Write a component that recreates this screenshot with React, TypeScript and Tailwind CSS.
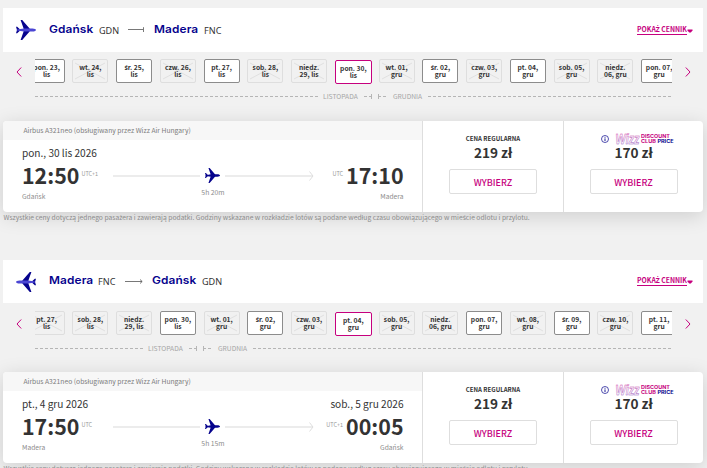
import clsx from 'clsx';

type DayState = 'open' | 'closed' | 'active';

interface Day {
  top: string;
  bottom: string;
  state: DayState;
}

interface Stop {
  city: string;
  date?: string;
  time: string;
  zone: string;
}

interface Flight {
  from: [string, string];
  to: [string, string];
  inbound?: boolean;
  days: Day[];
  departure: Stop;
  arrival: Stop;
  duration: string;
}

const day = (top: string, bottom: string, state: DayState = 'closed'): Day => ({ top, bottom, state });

const flights: Flight[] = [
  {
    from: ['Gdańsk', 'GDN'],
    to: ['Madera', 'FNC'],
    days: [
      day('pon. 23,', 'lis', 'open'),
      day('wt. 24,', 'lis'),
      day('śr. 25,', 'lis', 'open'),
      day('czw. 26,', 'lis'),
      day('pt. 27,', 'lis', 'open'),
      day('sob. 28,', 'lis'),
      day('niedz.', '29, lis'),
      day('pon. 30,', 'lis', 'active'),
      day('wt. 01,', 'gru'),
      day('śr. 02,', 'gru', 'open'),
      day('czw. 03,', 'gru'),
      day('pt. 04,', 'gru', 'open'),
      day('sob. 05,', 'gru'),
      day('niedz.', '06, gru'),
      day('pon. 07,', 'gru', 'open'),
    ],
    departure: { city: 'Gdańsk', date: 'pon., 30 lis 2026', time: '12:50', zone: 'UTC+1' },
    arrival: { city: 'Madera', time: '17:10', zone: 'UTC' },
    duration: '5h 20m',
  },
  {
    from: ['Madera', 'FNC'],
    to: ['Gdańsk', 'GDN'],
    inbound: true,
    days: [
      day('pt. 27,', 'lis'),
      day('sob. 28,', 'lis'),
      day('niedz.', '29, lis'),
      day('pon. 30,', 'lis', 'open'),
      day('wt. 01,', 'gru'),
      day('śr. 02,', 'gru', 'open'),
      day('czw. 03,', 'gru'),
      day('pt. 04,', 'gru', 'active'),
      day('sob. 05,', 'gru'),
      day('niedz.', '06, gru'),
      day('pon. 07,', 'gru', 'open'),
      day('wt. 08,', 'gru'),
      day('śr. 09,', 'gru', 'open'),
      day('czw. 10,', 'gru'),
      day('pt. 11,', 'gru', 'open'),
    ],
    departure: { city: 'Madera', date: 'pt., 4 gru 2026', time: '17:50', zone: 'UTC' },
    arrival: { city: 'Gdańsk', date: 'sob., 5 gru 2026', time: '00:05', zone: 'UTC+1' },
    duration: '5h 15m',
  },
];

// The CJK face misplaces the accents of these letters, so they come from Noto Sans
function Polish({ children }: { children: string }) {
  return (
    <>
      {children.split(/([śŚżŻąę])/).map((part, i) =>
        i % 2 ? (
          <span key={i} className="font-['Noto_Sans']">
            {part}
          </span>
        ) : (
          part
        )
      )}
    </>
  );
}

function Plane({ className, body }: { className: string; body: string }) {
  return (
    <svg viewBox="0 0 20 20" className={className}>
      <path
        d="M4.6 0H6.2L13.6 8.6V11.4L6.2 20H4.6L7.6 11.4V8.6ZM0 6.8H1.2L3.6 9V11L1.2 13.2H0L1 10Z"
        fill="#06038d"
      />
      <path d="M.8 9.5L8 8.4H16.5C18.6 8.4 20 9.4 20 10S18.6 11.6 16.5 11.6H8L.8 10.5Z" fill={body} />
    </svg>
  );
}

function RouteHeader({ flight }: { flight: Flight }) {
  const { from, to, inbound } = flight;
  const city =
    "w-[43px] origin-left scale-x-[1.1] font-['Inter'] text-[10.8px] font-semibold tracking-[0.1px] whitespace-nowrap text-[#06038d]";
  const code = "mt-px font-['Noto_Sans'] text-[9.1px] text-[#333]";

  return (
    <header
      className={clsx('flex items-center bg-white pr-[10px] pl-[13px] leading-none', inbound ? 'h-[43px]' : 'h-[44px]')}
    >
      <Plane className={clsx('h-5 w-5', inbound && '-scale-x-100')} body="#4b46d3" />
      <span className={clsx(city, 'ml-[13px]')}>{from[0]}</span>
      <span className={clsx(code, inbound ? 'ml-[6px] w-[19px]' : 'ml-[7px] w-[20px]')}>{from[1]}</span>
      {inbound ? (
        <svg viewBox="0 0 18 6" className="ml-[8px] h-[6px] w-[18px]" fill="none" stroke="#555">
          <path d="M0 2.5H17M15 .5L17.2 2.5L15 4.5" strokeWidth=".8" />
        </svg>
      ) : (
        <svg viewBox="0 0 17 6" className="ml-[9px] h-[6px] w-[17px]" fill="none" stroke="#555">
          <path d="M0 2.5H15M15.5 .2V5" strokeWidth=".8" />
        </svg>
      )}
      <span className={clsx(city, 'ml-[9px]')}>{to[0]}</span>
      <span className={clsx(code, 'ml-[7px]')}>{to[1]}</span>
      <a className="ml-auto flex items-center text-[6.8px] font-bold text-[#c6007e]">
        <span className="h-[9px] border-b border-[#c6007e] leading-[7px] whitespace-nowrap">
          <Polish>POKAŻ CENNIK</Polish>
        </span>
        <svg viewBox="0 0 6 4" className="mt-px h-1 w-[6px]">
          <path d="M.5 .5H5.5V1.6L3.8 3.4H2.2L.5 1.6Z" fill="#c6007e" />
        </svg>
      </a>
    </header>
  );
}

function Chevron({ flip }: { flip?: boolean }) {
  return (
    <svg viewBox="0 0 6 10" className={clsx('h-[10px] w-[6px] shrink-0', flip && '-scale-x-100')} fill="none">
      <path d="M5.2 .5L1 5L5.2 9.5" stroke="#c6007e" />
    </svg>
  );
}

function DayChip({ item }: { item: Day }) {
  return (
    <div className="flex h-[25px] w-[43.75px] shrink-0 items-start">
      <div
        className={clsx(
          'relative flex w-[36px] flex-col items-center justify-center rounded-[2px] border text-[6.7px] leading-[7px] font-bold whitespace-nowrap text-[#333]',
          item.state === 'open' && 'h-6 border-[#8c8c8c] bg-white',
          item.state === 'closed' && 'h-6 border-[#dedede]',
          item.state === 'active' && 'mt-px h-6 w-[37px] border-[#c6007e] bg-white'
        )}
      >
        {item.state === 'closed' && (
          <svg viewBox="0 0 34 22" className="absolute inset-0 h-full w-full" stroke="#dedede" strokeWidth=".9">
            <path d="M2 3L32 19M2 19L32 3" />
          </svg>
        )}
        <span className="relative h-[7px]">
          <Polish>{item.top}</Polish>
        </span>
        <span className="relative h-[7px]">{item.bottom}</span>
      </div>
    </div>
  );
}

function Dashes({ className }: { className?: string }) {
  return (
    <svg className={clsx('h-[5px]', className)} stroke="#b5b5b5">
      <line x1="0" y1="2.5" x2="100%" y2="2.5" strokeDasharray="3 2" />
    </svg>
  );
}

function Months({ inbound }: { inbound?: boolean }) {
  return (
    <div className="mx-8 mt-2 flex h-[9px] items-center text-[6.7px] leading-none text-[#a5a5a5]">
      <Dashes className={inbound ? 'w-[108px]' : 'w-[283px]'} />
      <span className="ml-[5px] w-[36px] whitespace-nowrap">LISTOPADA</span>
      <svg viewBox="0 0 22 5" className="ml-[5px] h-[5px] w-[22px] shrink-0" stroke="#b5b5b5">
        <path d="M0 2.5H3M5 2.5H7.5M7.5 0V5M14.5 0V5M14.5 2.5H17M19 2.5H22" />
      </svg>
      <span className="ml-[7px] w-[30px] whitespace-nowrap">GRUDNIA</span>
      <Dashes className="ml-[5px] flex-1" />
    </div>
  );
}

function DayStrip({ flight }: { flight: Flight }) {
  return (
    <div
      className={clsx('flex h-[25px] items-center justify-between pr-[12px] pl-[13px]', flight.inbound ? 'mt-2' : 'mt-[7px]')}
    >
      <Chevron />
      <div className="flex w-[637px] overflow-hidden">
        <div className="-ml-[6.4px] flex">
          {flight.days.map((item) => (
            <DayChip key={item.top + item.bottom} item={item} />
          ))}
        </div>
      </div>
      <Chevron flip />
    </div>
  );
}

function StopInfo({ stop, right }: { stop: Stop; right?: boolean }) {
  return (
    <div className={clsx('flex flex-col leading-none whitespace-nowrap', right && 'items-end')}>
      <span className="h-[14px] text-[10.1px] leading-[14px] text-[#333]">{stop.date}</span>
      <div className={clsx('mt-px flex h-[28px]', right && 'flex-row-reverse')}>
        <span className="text-[21.4px] leading-[28px] font-bold text-[#333]">{stop.time}</span>
        <span className={clsx('mt-[11px] text-[5.5px] text-[#999]', right ? 'mr-[3px]' : 'ml-[2px]')}>{stop.zone}</span>
      </div>
      <span className="mt-[3px] text-[6.7px] leading-[9px] text-[#8c8c8c]">{stop.city}</span>
    </div>
  );
}

function RouteLine({ duration }: { duration: string }) {
  return (
    <div className="absolute top-[47px] left-[110px] w-[201px]">
      <div className="flex items-center">
        <div className="h-[2px] w-[87px] bg-[#ececec]" />
        <Plane className="ml-[5px] h-[15px] w-[15px]" body="#06038d" />
        <div className="ml-[5px] h-[2px] flex-1 bg-[#ececec]" />
        <svg viewBox="0 0 5 10" className="-ml-1 h-[10px] w-[5px]" fill="none" stroke="#dedede">
          <path d="M.5 .5L4 5L.5 9.5" />
        </svg>
      </div>
      <p className="mt-[5px] pr-px text-center text-[6.8px] leading-[9px] text-[#8c8c8c]">{duration}</p>
    </div>
  );
}

function ClubLogo() {
  return (
    <div className="flex items-center justify-center pl-[8px]">
      <svg viewBox="0 0 8 8" className="mr-[6px] h-2 w-2" fill="none" stroke="#06038d">
        <circle cx="4" cy="4" r="3.5" strokeWidth=".7" />
        <path d="M4 3.4V6M4 1.9V2.7" strokeWidth=".9" />
      </svg>
      <svg viewBox="0 0 59 12" className="h-3 w-[59px]">
        <defs>
          <linearGradient id="wizz" x1="0" y1="0" x2="0" y2="1">
            <stop offset="0" stopColor="#d83aa0" />
            <stop offset="1" stopColor="#8a62c4" />
          </linearGradient>
        </defs>
        <text
          x=".5"
          y="10.8"
          fontSize="14"
          fontWeight="700"
          fontStyle="italic"
          fontFamily="Liberation Sans"
          textLength="24"
          lengthAdjust="spacingAndGlyphs"
          fill="#fff"
          stroke="url(#wizz)"
          strokeWidth=".5"
        >
          Wizz
        </text>
        <g fontSize="4.9" fontWeight="700" fontFamily="Inter" fill="#c6007e" stroke="none">
          <text x="26" y="5.2" textLength="29" lengthAdjust="spacingAndGlyphs">
            DISCOUNT
          </text>
          <text x="26" y="10.4" textLength="15" lengthAdjust="spacingAndGlyphs">
            CLUB
          </text>
          <text x="42.5" y="10.4" textLength="16" lengthAdjust="spacingAndGlyphs" fill="#06038d">
            PRICE
          </text>
        </g>
      </svg>
    </div>
  );
}

function Fare({ price, club }: { price: string; club?: boolean }) {
  return (
    <div
      className={clsx(
        'flex h-[91px] flex-col items-center border-l border-[#dedede] pt-3 leading-none',
        club ? 'w-[140px]' : 'w-[141px]'
      )}
    >
      <div className="flex h-3 items-center text-[6.1px] font-bold whitespace-nowrap text-[#333]">
        {club ? <ClubLogo /> : 'CENA REGULARNA'}
      </div>
      <div className="-mt-px h-4 text-[13.6px] leading-4 font-bold text-[#333]">{price}</div>
      <button className="mt-[9px] h-[25px] w-[88px] rounded-[2px] border border-[#dedede] pt-px text-[9px] leading-none font-medium text-[#c6007e]">
        WYBIERZ
      </button>
    </div>
  );
}

function FlightCard({ flight }: { flight: Flight }) {
  return (
    <article
      className={clsx(
        'flex h-[91px] rounded-[4px] bg-white shadow-[0_4px_20px_rgba(0,0,0,0.15)]',
        flight.inbound ? 'mt-[19px]' : 'mt-[20px]'
      )}
    >
      <div className="relative w-[419px]">
        <div className="h-[19px] rounded-tl-[4px] bg-[#f7f7f7] pl-[20.5px] text-[6.75px] leading-[19px] text-[#7c7c7c]">
          Airbus A321neo (obsługiwany przez Wizz Air Hungary)
        </div>
        <div className="flex justify-between pt-[6px] pr-[18.5px] pl-[19px]">
          <StopInfo stop={flight.departure} />
          <StopInfo stop={flight.arrival} right />
        </div>
        <RouteLine duration={flight.duration} />
      </div>
      <Fare price="219 zł" />
      <Fare price="170 zł" club />
    </article>
  );
}

export default function App() {
  return (
    <main className="h-[468px] w-[707px] overflow-hidden bg-[#f1f1f1] px-[3px] pt-2 pr-1 font-['Noto_Sans_CJK_JP','Noto_Sans',sans-serif]">
      {flights.map((flight) => (
        <section key={flight.from[0]} className="h-[252px]">
          <RouteHeader flight={flight} />
          <DayStrip flight={flight} />
          <Months inbound={flight.inbound} />
          <FlightCard flight={flight} />
          <p className="relative h-[10px] pl-[0.5px] text-[6.73px] leading-[10px] whitespace-nowrap text-[#8c8c8c]">
            <Polish>
              Wszystkie ceny dotyczą jednego pasażera i zawierają podatki. Godziny wskazane w rozkładzie lotów są podane według czasu obowiązującego w mieście odlotu i przylotu.
            </Polish>
          </p>
        </section>
      ))}
    </main>
  );
}
